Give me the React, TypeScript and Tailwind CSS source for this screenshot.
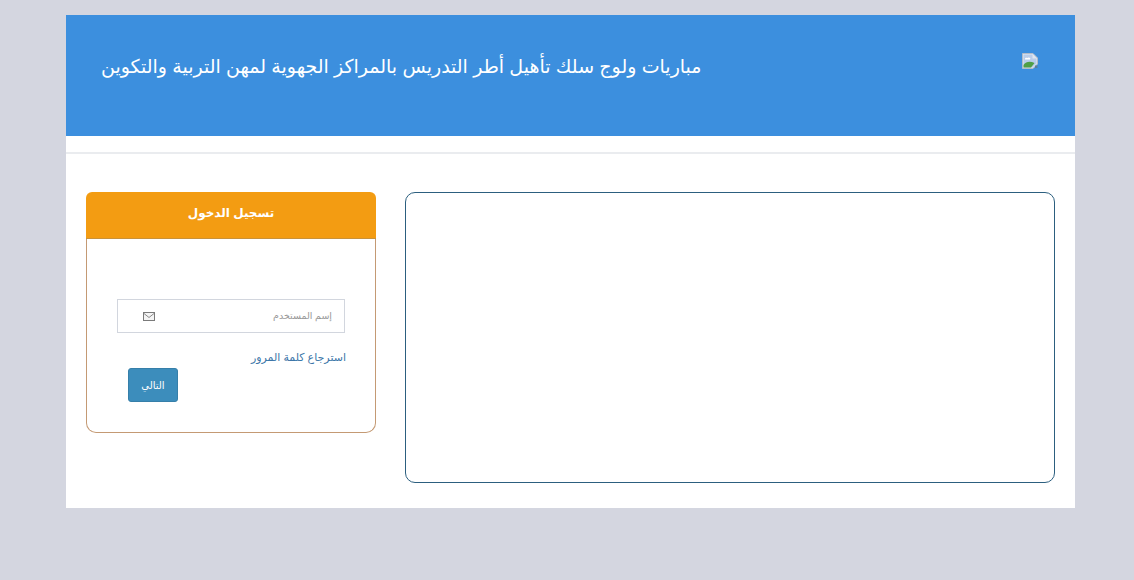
const arabic = "font-['Liberation_Sans','DejaVu_Sans',sans-serif]";

// Browser's broken-image placeholder
function BrokenImage() {
  return (
    <svg width="16" height="16" viewBox="0 0 16 16" className="block">
      <path d="M0.5 0.5H11L15.5 5V11L11 15.5H0.5Z" fill="#dfe6f0" stroke="#b4bcc8" />
      <path d="M1.5 1.5H10.5V5.5H14.5V10.5L10.5 14.5H1.5Z" fill="#b9cdea" />
      <path d="M3 6a1.5 1.2 0 0 1 2.5-1a1.5 1.2 0 0 1 2.5 1.5H3Z" fill="#ffffff" />
      <path d="M1.5 14.5V12C4 8.5 8 8 12.5 10L9 14.5Z" fill="#4f9f45" />
      <path d="M13 12.5h2.5V15H13Z" fill="#5a7f9c" />
    </svg>
  );
}

function EnvelopeIcon() {
  return (
    <svg width="12" height="9" viewBox="0 0 12 9" className="block">
      <rect x="0.5" y="0.5" width="11" height="8" fill="#f4f4f4" stroke="#7a7a7a" />
      <path d="M1 1.5L6 5.5L11 1.5" fill="none" stroke="#8a8a8a" />
    </svg>
  );
}

export default function App() {
  return (
    <div className={`min-h-[580px] bg-[#d4d6e0] pl-[66px] pr-[59px] pt-[15px] pb-[72px] ${arabic}`}>
      <div className="w-[1009px] bg-white">
        {/* Header */}
        <div className="flex h-[121px] items-start justify-between bg-[#3c8fde] pl-[35px] pr-[37px] text-white">
          <h1 className="mt-[35px] text-[19px] leading-[33px] font-normal" dir="rtl">
            مباريات ولوج سلك تأهيل أطر التدريس بالمراكز الجهوية لمهن التربية والتكوين
          </h1>
          <div className="mt-[38px]">
            <BrokenImage />
          </div>
        </div>
        <div className="h-[18px] border-b-2 border-[#eaecef]" />

        {/* Content */}
        <div className="flex items-start gap-[29px] pt-[38px] pr-5 pb-[25px] pl-5">
          {/* Login card */}
          <div className="w-[290px]">
            <div className="h-[47px] rounded-t-[6px] bg-[#f39c12] border-b border-[#c9923a] text-center text-white text-xs font-bold leading-[43px]" dir="rtl">
              تسجيل الدخول
            </div>
            <div className="h-[194px] rounded-b-[10px] border-x border-b border-[#c49a74] pt-[60px] pl-[30px] pr-[29px]">
              <div className="flex h-[34px] w-[228px] items-center justify-between border border-[#d2d6de] pl-[25px] pr-3">
                <EnvelopeIcon />
                <span className="text-[9.5px] text-[#999999]" dir="rtl">إسم المستخدم</span>
              </div>
              <a className="mt-4 block text-right text-[11px] leading-[17px] text-[#3c76a8]" dir="rtl">
                استرجاع كلمة المرور
              </a>
              <button className="mt-[2px] ml-[11px] block h-[34px] w-[50px] rounded-[3px] border border-[#367fa9] bg-[#3c8dbc] text-[10px] text-white">
                التالي
              </button>
            </div>
          </div>

          {/* Empty panel */}
          <div className="h-[291px] w-[650px] rounded-[10px] border border-[#2c5f7f]" />
        </div>
      </div>
    </div>
  );
}
